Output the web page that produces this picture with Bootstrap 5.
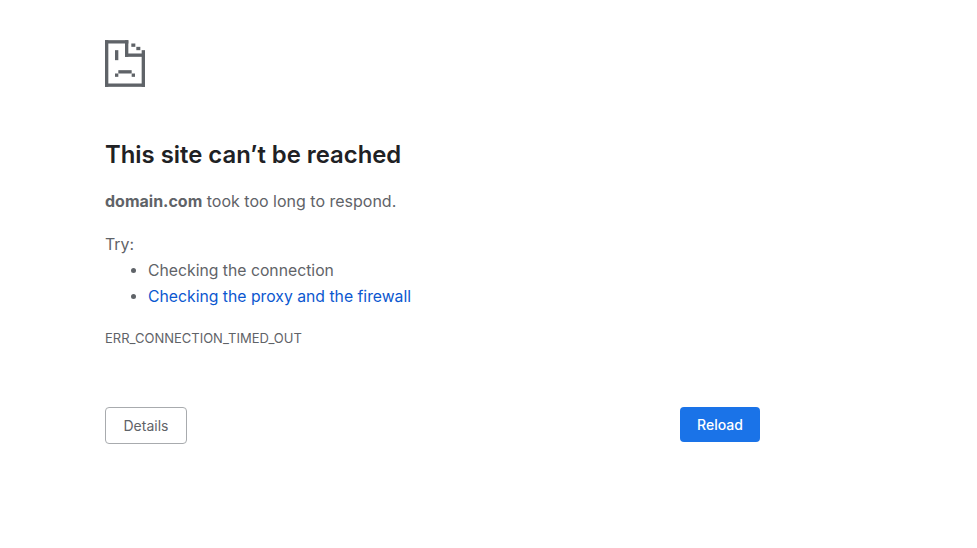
<!DOCTYPE html>
<html lang="en">
<head>
  <meta charset="UTF-8" />
  <title>This site can't be reached</title>
  <meta name="viewport" content="width=device-width, initial-scale=1" />
  <link href="https://cdn.jsdelivr.net/npm/bootstrap@5.3.3/dist/css/bootstrap.min.css" rel="stylesheet" />
  <style>
    body { font-family: Inter, "Liberation Sans", sans-serif; color: #5f6368; background: #fff; }
    .err-wrap { width: 655px; margin-left: 105px; padding-top: 40px; }
    .err-icon { display: block; width: 40px; height: 47px; }
    .err-title { font-size: 23.85px; line-height: 30px; font-weight: 600; color: #202124; margin: 53px 0 0; }
    .err-lead { font-size: 16px; line-height: 26px; margin: 18px 0 0; }
    .err-text { font-size: 15.9px; line-height: 26px; margin-top: 18px; }
    .err-list { font-size: 15.75px; padding-left: 43px; margin: 0; line-height: 26px; }
    .err-list li::marker { color: #5f6368; }
    .err-link { color: #0b57d0; text-decoration: none; }
    .err-code { font-size: 13px; line-height: 16px; color: #5f6368; margin-top: 20px; }
    .err-actions { margin-top: 61px; }
    .err-btn { font-size: 14px; font-weight: 400; line-height: 20px; border-radius: 4px; }
    .err-details { color: #5f6368; border: 1px solid #a8abae; background: #fff; width: 82px; height: 37px; padding: 0; }
    .err-reload { color: #fff; background: #1a73e8; border: 0; width: 80px; height: 35px; padding: 0; font-weight: 500; }
  </style>
</head>
<body>

<div class="err-wrap">
  <svg class="err-icon" viewBox="0 0 12 14" fill="#5f6368" aria-hidden="true">
    <rect x="0" y="0" width="7" height="1"/>
    <rect x="0" y="0" width="1" height="14"/>
    <rect x="0" y="13" width="12" height="1"/>
    <rect x="11" y="3" width="1" height="11"/>
    <rect x="6" y="0" width="1" height="5"/>
    <rect x="6" y="4" width="6" height="1"/>
    <rect x="7.9" y="1" width="1.2" height="1"/>
    <rect x="9.4" y="2" width="1.2" height="1"/>
    <rect x="3" y="3" width="1" height="3"/>
    <rect x="4" y="9" width="4" height="1"/>
    <rect x="3" y="10" width="1" height="1"/>
    <rect x="8" y="10" width="1" height="1"/>
  </svg>

  <h1 class="err-title">This site can’t be reached</h1>
  <p class="err-lead"><strong>domain.com</strong> took too long to respond.</p>

  <div class="err-text">
    <div>Try:</div>
    <ul class="err-list">
      <li>Checking the connection</li>
      <li><a class="err-link" href="#">Checking the proxy and the firewall</a></li>
    </ul>
  </div>

  <div class="err-code">ERR_CONNECTION_TIMED_OUT</div>

  <div class="err-actions d-flex justify-content-between align-items-start">
    <button type="button" class="btn err-btn err-details">Details</button>
    <button type="button" class="btn err-btn err-reload">Reload</button>
  </div>
</div>

<script src="https://cdn.jsdelivr.net/npm/bootstrap@5.3.3/dist/js/bootstrap.bundle.min.js"></script>
</body>
</html>
